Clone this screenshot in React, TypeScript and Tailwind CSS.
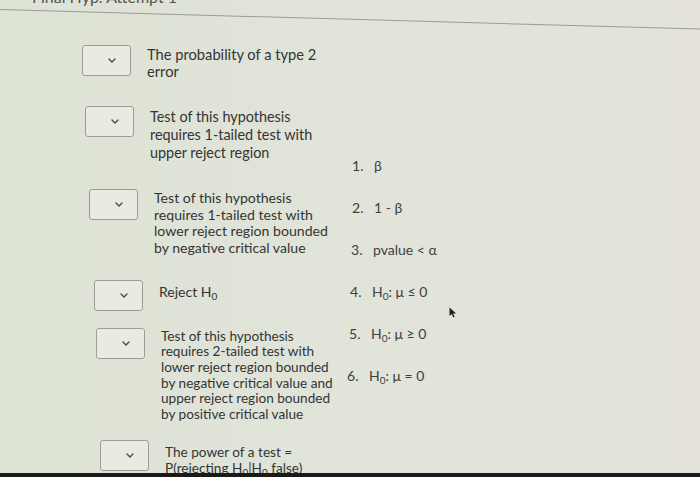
import React from 'react';

type Row = {
  lines: React.ReactNode[];
  shift: string;
  top: string;
  lead: string;
  pad: string;
  size: string;
};

const Sub = ({ children }: { children: React.ReactNode }) => (
  <span className="relative top-[3px] text-[10px] leading-none">{children}</span>
);

const H0 = () => (
  <>
    H<Sub>0</Sub>
  </>
);

const rows: Row[] = [
  {
    lines: ['The probability of a type 2', 'error'],
    shift: 'ml-0',
    top: 'mt-[42px]',
    lead: 'leading-[17px]',
    pad: 'pt-[1px]',
    size: 'text-[14.7px]',
  },
  {
    lines: ['Test of this hypothesis', 'requires 1-tailed test with', 'upper reject region'],
    shift: 'ml-[3px]',
    top: 'mt-[26px]',
    lead: 'leading-[18px]',
    pad: 'pt-[2px]',
    size: 'text-[14.4px]',
  },
  {
    lines: [
      'Test of this hypothesis',
      'requires 1-tailed test with',
      'lower reject region bounded',
      'by negative critical value',
    ],
    shift: 'ml-[7px]',
    top: 'mt-[27px]',
    lead: 'leading-[16.7px]',
    pad: 'pt-[1px]',
    size: 'text-[14.1px]',
  },
  {
    lines: [
      <>
        Reject <H0 />
      </>,
    ],
    shift: 'ml-[12px]',
    top: 'mt-[23px]',
    lead: 'leading-[17px]',
    pad: 'pt-[3px]',
    size: 'text-[14px]',
  },
  {
    lines: [
      'Test of this hypothesis',
      'requires 2-tailed test with',
      'lower reject region bounded',
      'by negative critical value and',
      'upper reject region bounded',
      'by positive critical value',
    ],
    shift: 'ml-[14px]',
    top: 'mt-[17px]',
    lead: 'leading-[15.6px]',
    pad: 'pt-[1px]',
    size: 'text-[13.6px]',
  },
  {
    lines: [
      'The power of a test =',
      <>
        P(rejecting <H0 />|<H0 /> false)
      </>,
    ],
    shift: 'ml-[18px]',
    top: 'mt-[18px]',
    lead: 'leading-[16px]',
    pad: 'pt-[4px]',
    size: 'text-[13.6px]',
  },
];

const choices: { label: React.ReactNode; shift: string }[] = [
  { label: 'β', shift: 'ml-[5px]' },
  { label: '1 - β', shift: 'ml-[5px]' },
  { label: 'pvalue < α', shift: 'ml-[4px]' },
  {
    label: (
      <>
        <H0 />: μ ≤ 0
      </>
    ),
    shift: 'ml-[3px]',
  },
  {
    label: (
      <>
        <H0 />: μ ≥ 0
      </>
    ),
    shift: 'ml-[2px]',
  },
  {
    label: (
      <>
        <H0 />: μ = 0
      </>
    ),
    shift: 'ml-0',
  },
];

function Dropdown() {
  return (
    <div className="flex h-[31px] w-[49px] shrink-0 items-center justify-end rounded-[3px] border border-[#9c9d98] bg-[#e9ebe3] pr-[14px]">
      <svg width="8" height="5" viewBox="0 0 8 5" fill="none">
        <path d="M1 1l3 3 3-3" stroke="#4a4a4a" strokeWidth="1.4" strokeLinecap="round" />
      </svg>
    </div>
  );
}

export default function App() {
  return (
    <div className="relative h-[477px] w-[700px] overflow-hidden bg-gradient-to-r from-[#dde3d5] via-[#e1e4d9] to-[#e4e2d9] font-['Lato','Liberation_Sans',sans-serif] text-[14px] text-[#343434]">
      {/* page title, scrolled mostly out of view */}
      <div className="-mt-[12px] pl-[32px] text-[16px] leading-[18px] text-[#555]">Final Hyp. Attempt 1</div>
      <div className="mt-[3px] h-px w-[720px] origin-left rotate-[1.6deg] bg-[#9a9c98]" />

      <div className="-mt-[7px] grid grid-cols-[347px_1fr]">
        <div className="flex flex-col pl-[82px]">
          {rows.map((row, i) => (
            <div key={i} className={`flex items-start gap-[16px] ${row.top} ${row.shift}`}>
              <Dropdown />
              <div className={`${row.pad} ${row.lead} ${row.size}`}>
                {row.lines.map((line, j) => (
                  <div key={j} className="whitespace-nowrap">
                    {line}
                  </div>
                ))}
              </div>
            </div>
          ))}
        </div>

        <ol className="flex flex-col gap-[25px] pt-[154px] text-[#404040]">
          {choices.map((c, i) => (
            <li key={i} className={`flex leading-[17px] ${c.shift}`}>
              <span className="w-[22px]">{i + 1}.</span>
              <span>{c.label}</span>
            </li>
          ))}
        </ol>
      </div>

      {/* mouse pointer */}
      <svg className="absolute left-[449px] top-[307px]" width="8" height="11" viewBox="0 0 8 11">
        <path d="M0.5 0.5v8.5l2.2-2 1.6 3.4 1.3-0.6-1.5-3.3h3z" fill="#222" />
      </svg>

      <div className="absolute bottom-0 left-0 h-[4px] w-full bg-[#1a1a1a]" />
    </div>
  );
}
